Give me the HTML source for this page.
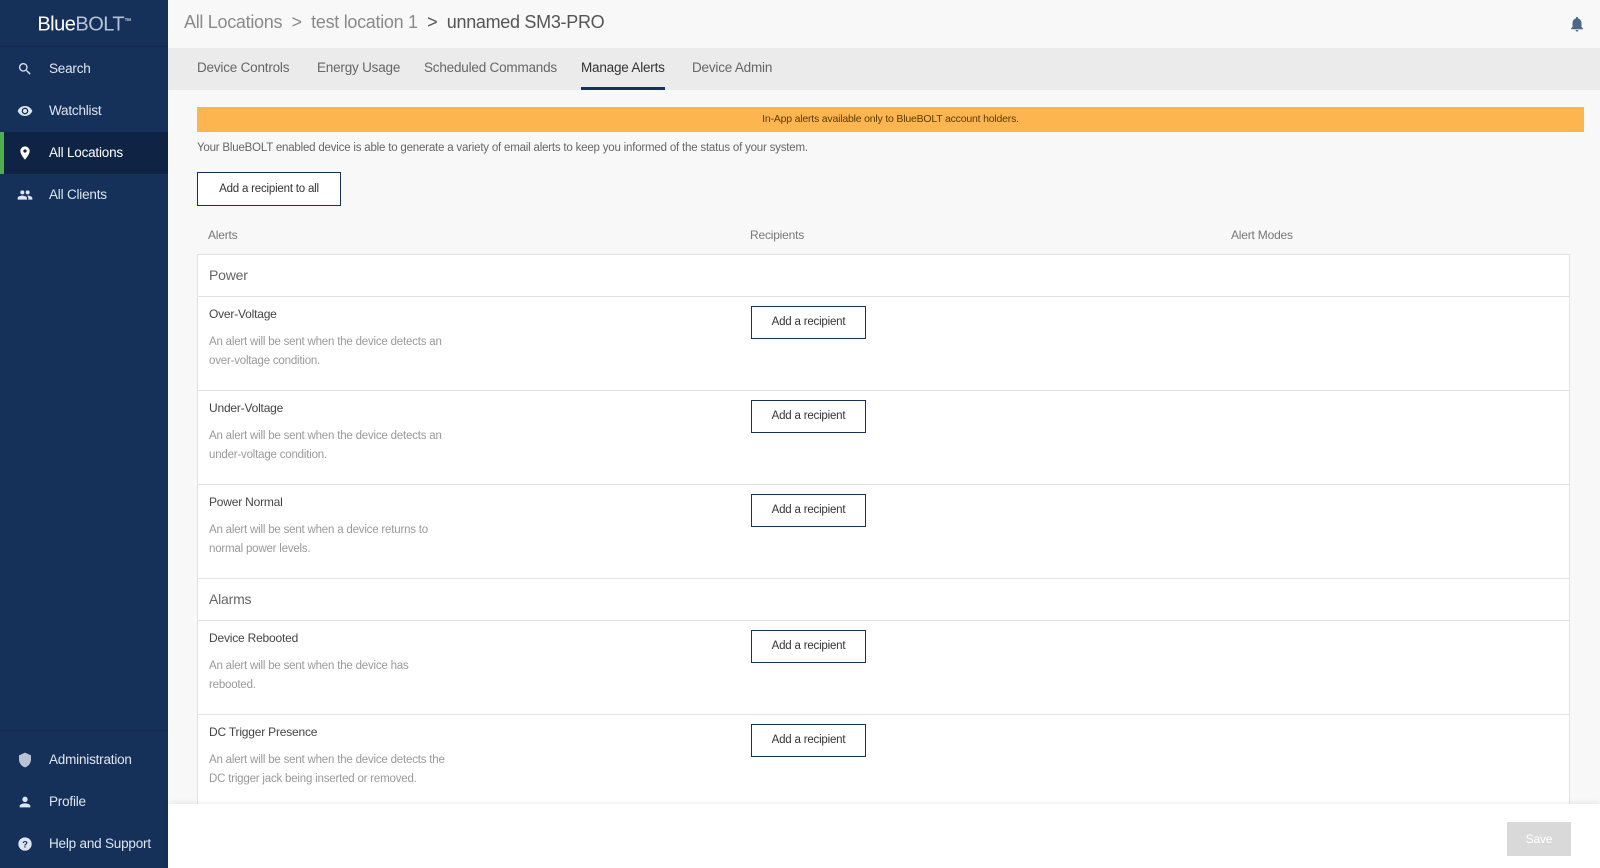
<!DOCTYPE html>
<html><head><meta charset="utf-8"><style>
*{margin:0;padding:0;box-sizing:border-box}
body{width:1600px;height:868px;overflow:hidden;background:#f8f8f8;font-family:"Liberation Sans Narrow","Liberation Sans",sans-serif;color:#444;position:relative;letter-spacing:-0.2px}
.sb{position:absolute;left:0;top:0;width:168px;height:868px;background:#15315a}
.logo{position:absolute;left:0;top:0;width:168px;height:47px;border-bottom:1px solid #112a4d;text-align:center;font-size:20px;line-height:44px;color:#fff;letter-spacing:-0.5px}
.logo b{font-weight:normal;color:#b7c4d8}
.logo sup{font-size:7px}
.nav{position:absolute;left:0;width:168px;height:42px;color:#dfe5ee;font-size:13.5px;line-height:42px;padding-left:49px}
.nav.act{background:#0f2444;color:#fff;border-left:4px solid #4caf50;padding-left:45px}
.nav svg{position:absolute;left:17px;top:13px}
.nav.act svg{left:13px}
.hd{position:absolute;left:168px;top:0;right:0;height:48px;background:#f8f8f8;font-size:18px;line-height:44px;color:#8a8a8a;padding-left:16px;letter-spacing:-0.3px}
.hd span{color:#555}
.tabs{position:absolute;left:168px;top:48px;right:0;height:42px;background:#ebebeb;font-size:13.5px;color:#666}
.tab{position:absolute;top:0;line-height:40px}
.tab.act{color:#333;border-bottom:3px solid #15315a;height:42px}
.banner{position:absolute;left:197px;top:107px;width:1387px;height:25px;background:#fdb64f;text-align:center;font-size:10.5px;line-height:25px;color:#5a3a00}
.intro{position:absolute;left:197px;top:142px;font-size:11.5px;color:#666}
.btn{position:absolute;border:1px solid #15315a;background:#fff;color:#333;font-size:11.5px;text-align:center}
.th{position:absolute;top:228px;font-size:12px;color:#777}
.tbl{position:absolute;left:197px;top:254px;width:1373px;height:560px;background:#fff;border:1px solid #e2e2e2}
.row{position:absolute;left:0;right:0;border-bottom:1px solid #e2e2e2}
.sec{font-size:14px;color:#666;padding-left:11px;line-height:40px}
.t{position:absolute;left:11px;top:10px;font-size:12px;color:#444}
.d{position:absolute;left:11px;top:36px;font-size:11.5px;color:#999;line-height:19px}
.row .btn{left:553px;top:9px;width:115px;height:33px;line-height:31px}
.foot{position:absolute;left:168px;top:804px;right:0;bottom:0;background:#fff;box-shadow:0 -2px 4px rgba(0,0,0,.06)}
.save{position:absolute;left:1507px;top:822px;width:64px;height:34px;background:#d9d9d9;color:#fff;font-size:12px;text-align:center;line-height:34px}
</style></head><body>
<div class="sb">
<div class="logo">Blue<b>BOLT</b><sup>™</sup></div>
<div class="nav" style="top:48px"><svg width="16" height="16" viewBox="0 0 24 24"><path fill="#dfe5ee" d="M15.5 14h-.8l-.3-.3A6.5 6.5 0 1 0 9.5 16a6.5 6.5 0 0 0 4.2-1.6l.3.3v.8l5 5 1.5-1.5-5-5zm-6 0C7 14 5 12 5 9.5S7 5 9.5 5 14 7 14 9.5 12 14 9.5 14z"/></svg>Search</div>
<div class="nav" style="top:90px"><svg width="16" height="16" viewBox="0 0 24 24"><path fill="#dfe5ee" d="M12 4.5C7 4.5 2.7 7.6 1 12c1.7 4.4 6 7.5 11 7.5s9.3-3.1 11-7.5c-1.7-4.4-6-7.5-11-7.5zM12 17a5 5 0 1 1 0-10 5 5 0 0 1 0 10zm0-8a3 3 0 1 0 0 6 3 3 0 0 0 0-6z"/></svg>Watchlist</div>
<div class="nav act" style="top:132px"><svg width="16" height="16" viewBox="0 0 24 24"><path fill="#fff" d="M12 2a7 7 0 0 0-7 7c0 5.3 7 13 7 13s7-7.7 7-13a7 7 0 0 0-7-7zm0 9.5a2.5 2.5 0 1 1 0-5 2.5 2.5 0 0 1 0 5z"/></svg>All Locations</div>
<div class="nav" style="top:174px"><svg width="16" height="16" viewBox="0 0 24 24"><path fill="#dfe5ee" d="M16 11a3 3 0 1 0 0-6 3 3 0 0 0 0 6zm-8 0a3 3 0 1 0 0-6 3 3 0 0 0 0 6zm0 2c-2.3 0-7 1.2-7 3.5V19h14v-2.5C15 14.2 10.3 13 8 13zm8 0h-1c1.2.8 2 2 2 3.5V19h6v-2.5c0-2.3-4.7-3.5-7-3.5z"/></svg>All Clients</div>
<div style="position:absolute;top:730px;left:0;width:168px;border-top:1px solid #112a4d"></div>
<div class="nav" style="top:739px"><svg width="16" height="16" viewBox="0 0 24 24"><path fill="#b9c3d2" d="M12 1L3 5v6c0 5.5 3.8 10.7 9 12 5.2-1.3 9-6.5 9-12V5l-9-4z"/></svg>Administration</div>
<div class="nav" style="top:781px"><svg width="16" height="16" viewBox="0 0 24 24"><path fill="#dfe5ee" d="M12 12a4 4 0 1 0 0-8 4 4 0 0 0 0 8zm0 2c-2.7 0-8 1.3-8 4v2h16v-2c0-2.7-5.3-4-8-4z"/></svg>Profile</div>
<div class="nav" style="top:823px"><svg width="16" height="16" viewBox="0 0 24 24"><circle cx="12" cy="12" r="10" fill="#dfe5ee"/><text x="12" y="17" font-size="14" text-anchor="middle" fill="#15315a" font-family="Liberation Sans" font-weight="bold">?</text></svg>Help and Support</div>
</div>
<div class="hd">All Locations &nbsp;&gt;&nbsp; test location 1 &nbsp;<span>&gt;&nbsp; unnamed SM3-PRO</span>
<svg style="position:absolute;right:14px;top:14px" width="18" height="20" viewBox="0 0 24 24"><path fill="#4e6788" d="M12 22a2 2 0 0 0 2-2h-4a2 2 0 0 0 2 2zm6-6v-5c0-3-1.6-5.6-4.5-6.3V4a1.5 1.5 0 0 0-3 0v.7C7.6 5.4 6 8 6 11v5l-2 2v1h16v-1l-2-2z"/></svg></div>
<div class="tabs">
<div class="tab" style="left:29px">Device Controls</div>
<div class="tab" style="left:149px">Energy Usage</div>
<div class="tab" style="left:256px">Scheduled Commands</div>
<div class="tab act" style="left:413px">Manage Alerts</div>
<div class="tab" style="left:524px">Device Admin</div>
</div>
<div class="banner">In-App alerts available only to BlueBOLT account holders.</div>
<div class="intro">Your BlueBOLT enabled device is able to generate a variety of email alerts to keep you informed of the status of your system.</div>
<div class="btn" style="left:197px;top:172px;width:144px;height:34px;line-height:32px">Add a recipient to all</div>
<div class="th" style="left:208px">Alerts</div>
<div class="th" style="left:750px">Recipients</div>
<div class="th" style="left:1231px">Alert Modes</div>
<div class="tbl">
<div class="row sec" style="top:0;height:42px">Power</div>
<div class="row" style="top:42px;height:94px"><div class="t">Over-Voltage</div><div class="d">An alert will be sent when the device detects an<br>over-voltage condition.</div><div class="btn">Add a recipient</div></div>
<div class="row" style="top:136px;height:94px"><div class="t">Under-Voltage</div><div class="d">An alert will be sent when the device detects an<br>under-voltage condition.</div><div class="btn">Add a recipient</div></div>
<div class="row" style="top:230px;height:94px"><div class="t">Power Normal</div><div class="d">An alert will be sent when a device returns to<br>normal power levels.</div><div class="btn">Add a recipient</div></div>
<div class="row sec" style="top:324px;height:42px">Alarms</div>
<div class="row" style="top:366px;height:94px"><div class="t">Device Rebooted</div><div class="d">An alert will be sent when the device has<br>rebooted.</div><div class="btn">Add a recipient</div></div>
<div class="row" style="top:460px;height:94px"><div class="t">DC Trigger Presence</div><div class="d">An alert will be sent when the device detects the<br>DC trigger jack being inserted or removed.</div><div class="btn">Add a recipient</div></div>
</div>
<div class="foot"></div>
<div class="save">Save</div>
</body></html>
